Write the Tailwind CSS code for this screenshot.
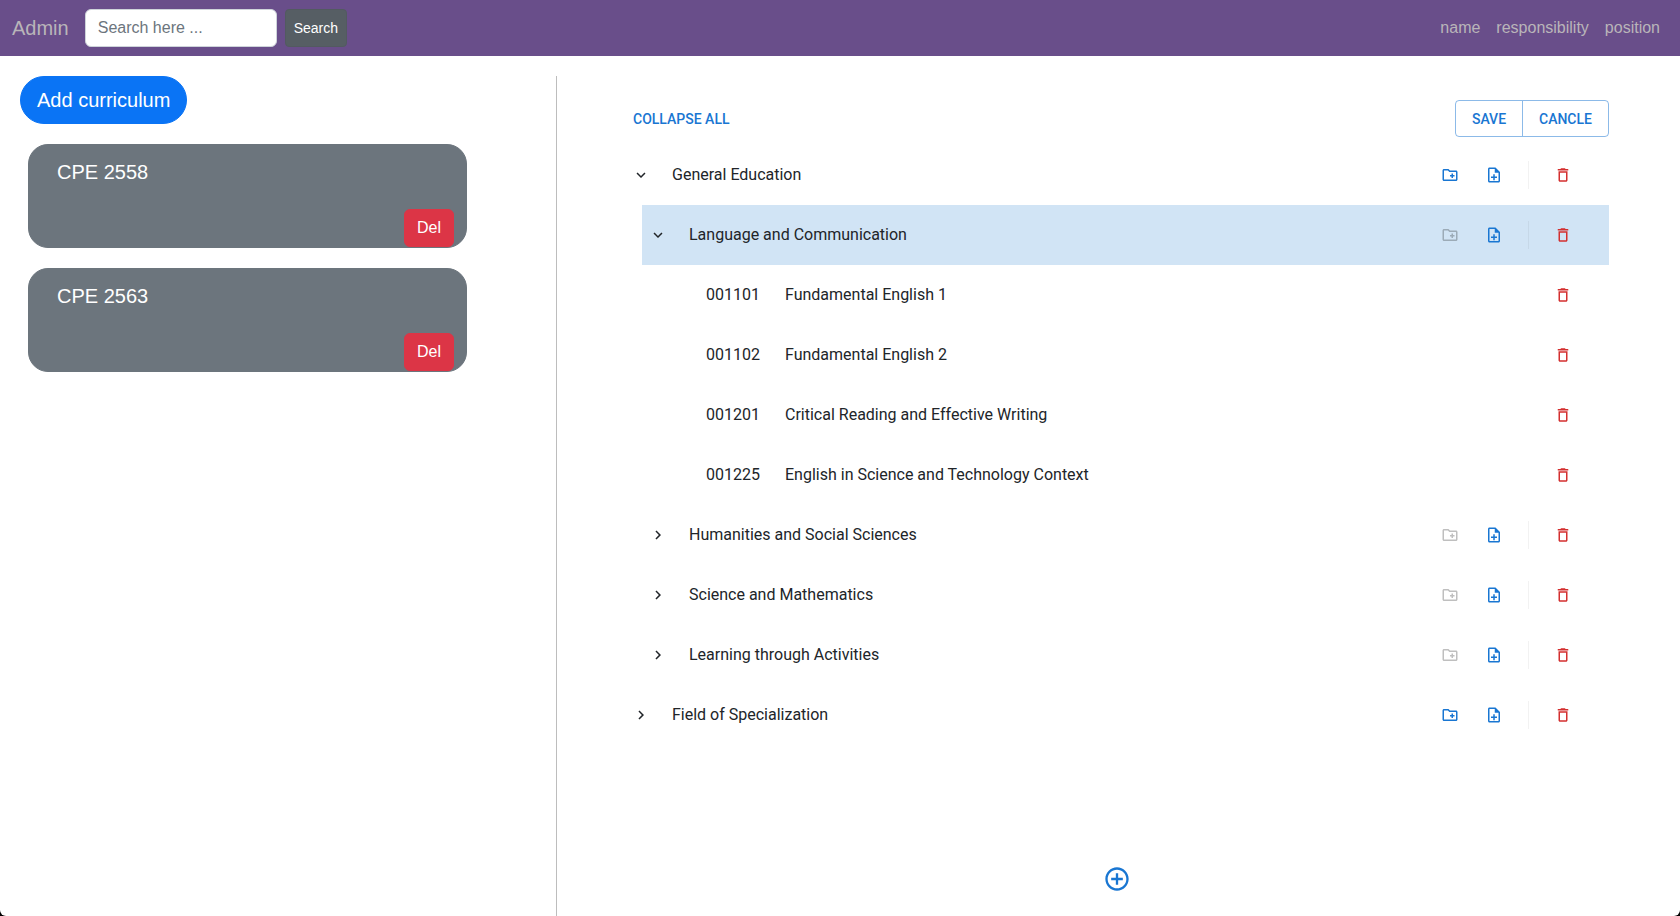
<!DOCTYPE html>
<html lang="en" class="bg-black">
<head>
<meta charset="utf-8">
<meta name="viewport" content="width=device-width, initial-scale=1">
<title>Admin</title>
<script src="https://cdn.jsdelivr.net/npm/@tailwindcss/browser@4"></script>
</head>
<body class="flex min-h-screen flex-col overflow-hidden rounded-b-md bg-white font-['Liberation_Sans',Arial,sans-serif] text-base text-[#212529]">
<svg class="hidden" aria-hidden="true">
  <symbol id="folder" viewBox="0 0 24 24"><path d="M20 6h-8l-2-2H4c-1.11 0-1.99.89-1.99 2L2 18c0 1.11.89 2 2 2h16c1.11 0 2-.89 2-2V8c0-1.11-.89-2-2-2zm0 12H4V6h5.17l2 2H20v10zm-8-4h2v2h2v-2h2v-2h-2v-2h-2v2h-2v2z"/></symbol>
  <symbol id="note" viewBox="0 0 24 24"><path d="M13 11h-2v3H8v2h3v3h2v-3h3v-2h-3zm1-9H6c-1.1 0-2 .9-2 2v16c0 1.1.89 2 1.99 2H18c1.1 0 2-.9 2-2V8l-6-6zm4 18H6V4h7v5h5v11z"/></symbol>
  <symbol id="trash" viewBox="0 0 24 24"><path d="M6 19c0 1.1.9 2 2 2h8c1.1 0 2-.9 2-2V7H6v12zM8 9h8v10H8V9zm7.5-5-1-1h-5l-1 1H5v2h14V4h-3.5z"/></symbol>
  <symbol id="down" viewBox="0 0 24 24"><path d="M16.59 8.59 12 13.17 7.41 8.59 6 10l6 6 6-6z"/></symbol>
  <symbol id="right" viewBox="0 0 24 24"><path d="M10 6 8.59 7.41 13.17 12l-4.58 4.59L10 18l6-6z"/></symbol>
  <symbol id="plus" viewBox="0 0 24 24"><path d="M13 7h-2v4H7v2h4v4h2v-4h4v-2h-4V7zm-1-5C6.48 2 2 6.48 2 12s4.48 10 10 10 10-4.48 10-10S17.52 2 12 2zm0 18c-4.41 0-8-3.59-8-8s3.59-8 8-8 8 3.59 8 8-3.59 8-8 8z"/></symbol>
</svg>

<header class="flex h-14 items-center justify-between bg-[#694e8a] pr-5 pl-3">
  <div class="flex items-center">
    <a href="#" class="mr-4 text-xl text-[#b9b5b9]">Admin</a>
    <form class="flex gap-2">
      <input type="search" aria-label="Search" placeholder="Search here ..." class="h-[38px] w-48 rounded-md border border-[#ced4da] bg-white px-3 placeholder:text-[#6c757d]">
      <button type="button" class="h-[38px] rounded-sm border border-[#525a60] bg-[#565e64] px-2 text-sm text-white">Search</button>
    </form>
  </div>
  <nav class="flex gap-4 text-[#b9b5b9]">
    <a href="#">name</a>
    <a href="#">responsibility</a>
    <a href="#">position</a>
  </nav>
</header>

<main class="grid flex-1 grid-cols-[537fr_1123fr] pt-5 pl-5">
  <section class="border-r border-[#bdbdbd]">
    <button type="button" class="h-12 rounded-full border border-[#0a74f5] bg-[#0a74f5] px-4 text-xl leading-7 text-white">Add curriculum</button>
    <div class="mt-5 mr-[89px] ml-2 flex flex-col gap-5">
      <article class="flex h-[104px] flex-col justify-between rounded-[20px] border border-[#6c757d] bg-[#6c757d] pt-[11px] pr-3 pl-7">
        <h2 class="text-xl leading-8 text-white">CPE 2558</h2>
        <button type="button" class="h-[38px] self-end rounded-md border border-[#dc3546] bg-[#dc3546] px-3 text-white">Del</button>
      </article>
      <article class="flex h-[104px] flex-col justify-between rounded-[20px] border border-[#6c757d] bg-[#6c757d] pt-[11px] pr-3 pl-7">
        <h2 class="text-xl leading-8 text-white">CPE 2563</h2>
        <button type="button" class="h-[38px] self-end rounded-md border border-[#dc3546] bg-[#dc3546] px-3 text-white">Del</button>
      </article>
    </div>
  </section>

  <section class="flex flex-col pt-6 pr-[71px] pb-[23px] pl-[68px] font-[Roboto,sans-serif]">
    <div class="flex h-[37px] items-center justify-between text-sm font-medium text-[#1976d2]">
      <button type="button" class="px-2">COLLAPSE ALL</button>
      <div class="flex h-full rounded-sm border border-[#1976d2]/50">
        <button type="button" class="w-[67px] border-r border-[#1976d2]/50">SAVE</button>
        <button type="button" class="w-[85px]">CANCLE</button>
      </div>
    </div>

    <ul class="mt-2">
      <li>
        <div class="flex h-15 items-center pr-8 pl-[7px]">
          <button type="button" aria-label="Collapse" class="mr-[22px]"><svg class="size-[18px] fill-current"><use href="#down"/></svg></button>
          <span class="flex-1">General Education</span>
          <button type="button" aria-label="Add folder" class="p-[5px] text-[#1976d2]"><svg class="size-[18px] fill-current"><use href="#folder"/></svg></button>
          <button type="button" aria-label="Add course" class="ml-4 p-[5px] text-[#1976d2]"><svg class="size-[18px] fill-current"><use href="#note"/></svg></button>
          <span class="mx-5 h-7 w-px bg-black/5"></span>
          <button type="button" aria-label="Delete" class="p-[5px] text-[#d32f2f]"><svg class="size-[18px] fill-current"><use href="#trash"/></svg></button>
        </div>
        <ul class="ml-[17px]">
          <li>
            <div class="flex h-15 items-center bg-[#d1e4f5] pr-8 pl-[7px]">
              <button type="button" aria-label="Collapse" class="mr-[22px]"><svg class="size-[18px] fill-current"><use href="#down"/></svg></button>
              <span class="flex-1">Language and Communication</span>
              <button type="button" aria-label="Add folder" disabled class="p-[5px] text-black/25"><svg class="size-[18px] fill-current"><use href="#folder"/></svg></button>
              <button type="button" aria-label="Add course" class="ml-4 p-[5px] text-[#1976d2]"><svg class="size-[18px] fill-current"><use href="#note"/></svg></button>
              <span class="mx-5 h-7 w-px bg-black/5"></span>
              <button type="button" aria-label="Delete" class="p-[5px] text-[#d32f2f]"><svg class="size-[18px] fill-current"><use href="#trash"/></svg></button>
            </div>
            <ul class="ml-[17px]">
              <li class="flex h-15 items-center pr-8 pl-[47px]">
                <span class="w-[79px]">001101</span><span class="flex-1">Fundamental English 1</span>
                <button type="button" aria-label="Delete" class="p-[5px] text-[#d32f2f]"><svg class="size-[18px] fill-current"><use href="#trash"/></svg></button>
              </li>
              <li class="flex h-15 items-center pr-8 pl-[47px]">
                <span class="w-[79px]">001102</span><span class="flex-1">Fundamental English 2</span>
                <button type="button" aria-label="Delete" class="p-[5px] text-[#d32f2f]"><svg class="size-[18px] fill-current"><use href="#trash"/></svg></button>
              </li>
              <li class="flex h-15 items-center pr-8 pl-[47px]">
                <span class="w-[79px]">001201</span><span class="flex-1">Critical Reading and Effective Writing</span>
                <button type="button" aria-label="Delete" class="p-[5px] text-[#d32f2f]"><svg class="size-[18px] fill-current"><use href="#trash"/></svg></button>
              </li>
              <li class="flex h-15 items-center pr-8 pl-[47px]">
                <span class="w-[79px]">001225</span><span class="flex-1">English in Science and Technology Context</span>
                <button type="button" aria-label="Delete" class="p-[5px] text-[#d32f2f]"><svg class="size-[18px] fill-current"><use href="#trash"/></svg></button>
              </li>
            </ul>
          </li>
          <li class="flex h-15 items-center pr-8 pl-[7px]">
            <button type="button" aria-label="Expand" class="mr-[22px]"><svg class="size-[18px] fill-current"><use href="#right"/></svg></button>
            <span class="flex-1">Humanities and Social Sciences</span>
            <button type="button" aria-label="Add folder" disabled class="p-[5px] text-black/25"><svg class="size-[18px] fill-current"><use href="#folder"/></svg></button>
            <button type="button" aria-label="Add course" class="ml-4 p-[5px] text-[#1976d2]"><svg class="size-[18px] fill-current"><use href="#note"/></svg></button>
            <span class="mx-5 h-7 w-px bg-black/5"></span>
            <button type="button" aria-label="Delete" class="p-[5px] text-[#d32f2f]"><svg class="size-[18px] fill-current"><use href="#trash"/></svg></button>
          </li>
          <li class="flex h-15 items-center pr-8 pl-[7px]">
            <button type="button" aria-label="Expand" class="mr-[22px]"><svg class="size-[18px] fill-current"><use href="#right"/></svg></button>
            <span class="flex-1">Science and Mathematics</span>
            <button type="button" aria-label="Add folder" disabled class="p-[5px] text-black/25"><svg class="size-[18px] fill-current"><use href="#folder"/></svg></button>
            <button type="button" aria-label="Add course" class="ml-4 p-[5px] text-[#1976d2]"><svg class="size-[18px] fill-current"><use href="#note"/></svg></button>
            <span class="mx-5 h-7 w-px bg-black/5"></span>
            <button type="button" aria-label="Delete" class="p-[5px] text-[#d32f2f]"><svg class="size-[18px] fill-current"><use href="#trash"/></svg></button>
          </li>
          <li class="flex h-15 items-center pr-8 pl-[7px]">
            <button type="button" aria-label="Expand" class="mr-[22px]"><svg class="size-[18px] fill-current"><use href="#right"/></svg></button>
            <span class="flex-1">Learning through Activities</span>
            <button type="button" aria-label="Add folder" disabled class="p-[5px] text-black/25"><svg class="size-[18px] fill-current"><use href="#folder"/></svg></button>
            <button type="button" aria-label="Add course" class="ml-4 p-[5px] text-[#1976d2]"><svg class="size-[18px] fill-current"><use href="#note"/></svg></button>
            <span class="mx-5 h-7 w-px bg-black/5"></span>
            <button type="button" aria-label="Delete" class="p-[5px] text-[#d32f2f]"><svg class="size-[18px] fill-current"><use href="#trash"/></svg></button>
          </li>
        </ul>
      </li>
      <li class="flex h-15 items-center pr-8 pl-[7px]">
        <button type="button" aria-label="Expand" class="mr-[22px]"><svg class="size-[18px] fill-current"><use href="#right"/></svg></button>
        <span class="flex-1">Field of Specialization</span>
        <button type="button" aria-label="Add folder" class="p-[5px] text-[#1976d2]"><svg class="size-[18px] fill-current"><use href="#folder"/></svg></button>
        <button type="button" aria-label="Add course" class="ml-4 p-[5px] text-[#1976d2]"><svg class="size-[18px] fill-current"><use href="#note"/></svg></button>
        <span class="mx-5 h-7 w-px bg-black/5"></span>
        <button type="button" aria-label="Delete" class="p-[5px] text-[#d32f2f]"><svg class="size-[18px] fill-current"><use href="#trash"/></svg></button>
      </li>
    </ul>
    <button type="button" aria-label="Add group" class="mt-auto self-center text-[#1976d2]"><svg class="size-7 fill-current"><use href="#plus"/></svg></button>
  </section>
</main>
</body>
</html>
